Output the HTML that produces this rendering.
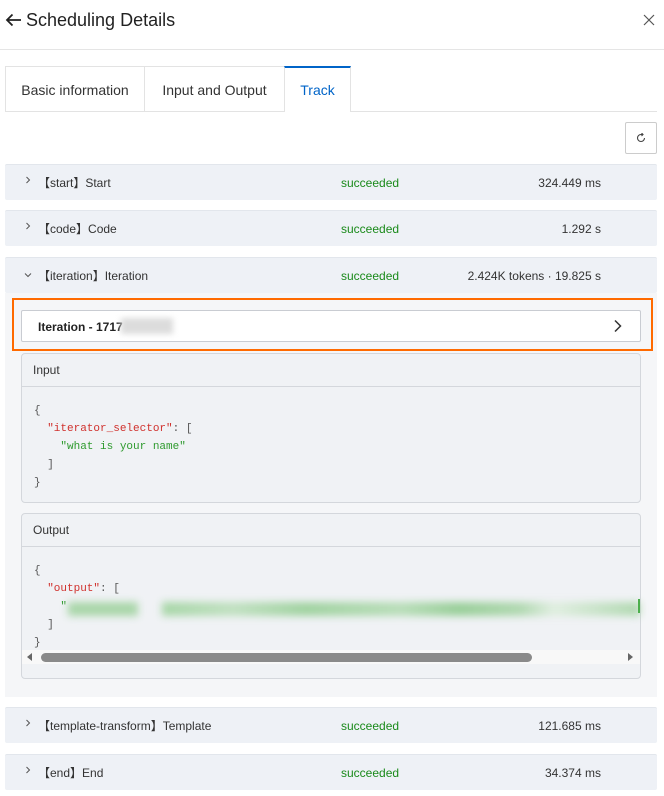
<!DOCTYPE html>
<html><head><meta charset="utf-8"><style>
*{box-sizing:border-box;margin:0;padding:0}
body{width:664px;height:796px;background:#fff;font-family:"Liberation Sans","Noto Sans CJK SC",sans-serif;color:#333;position:relative;overflow:hidden;font-size:12px}
.a{position:absolute}
.row{position:absolute;left:5px;width:652px;height:36px;background:#eef1f6;border-top:1px solid #e2e6ec;border-radius:2px}
.row svg{position:absolute;left:19px;top:11px}
.row .lb{position:absolute;left:33px;top:11px;font-size:12px;line-height:14px;color:#333;font-family:"Liberation Sans",sans-serif}
.row .st{position:absolute;left:336px;top:11px;line-height:14px;color:#1a8a1a}
.row .tm{position:absolute;right:56px;top:11px;line-height:14px;color:#333}
.mono{font-family:"Liberation Mono","DejaVu Sans Mono",monospace;font-size:11px}
.card{position:absolute;left:21px;width:620px;border:1px solid #d4d7dc;border-radius:4px;background:#f0f2f5}
.card .hd{height:33px;border-bottom:1px solid #d4d7dc;padding:9px 11px;font-size:12px;color:#333}
.r{color:#d0312d}.g{color:#2e9a2e}.k{color:#555}
</style></head><body>
<svg class="a" style="left:5px;top:13px" width="17" height="14" viewBox="0 0 17 14"><path d="M16 7H2M7.5 1.5L2 7l5.5 5.5" fill="none" stroke="#222" stroke-width="1.8"/></svg>
<div class="a" style="left:26px;top:9px;font-size:18px;line-height:22px;color:#222">Scheduling Details</div>
<svg class="a" style="left:643px;top:14px" width="12" height="12" viewBox="0 0 12 12"><path d="M1 1l10 10M11 1L1 11" stroke="#555" stroke-width="1.2"/></svg>
<div class="a" style="left:0;top:49px;width:664px;height:1px;background:#e5e5e5"></div>

<div class="a" style="left:5px;top:66px;width:140px;height:46px;border:1px solid #e3e3e3;background:#fff;padding-top:15px;text-align:center;font-size:14px;color:#333">Basic information</div>
<div class="a" style="left:145px;top:66px;width:140px;height:46px;border:1px solid #e3e3e3;border-left:none;background:#fff;padding-top:15px;text-align:center;font-size:14px;color:#333">Input and Output</div>
<div class="a" style="left:284px;top:66px;width:67px;height:46px;border-top:2px solid #0064c8;border-left:1px solid #e3e3e3;border-right:1px solid #e3e3e3;background:#fff;padding-top:14px;text-align:center;font-size:14px;color:#0064c8">Track</div>
<div class="a" style="left:350px;top:111px;width:307px;height:1px;background:#e3e3e3"></div>

<div class="a" style="left:625px;top:122px;width:32px;height:32px;border:1px solid #ccc;border-radius:2px"></div>
<svg class="a" style="left:636px;top:133px" width="10" height="10" viewBox="0 0 10 10"><path d="M8.5 5A3.5 3.5 0 1 1 5 1.5h1.5" fill="none" stroke="#444" stroke-width="1.1"/><path d="M5.5 0L7 1.5 5.5 3" fill="none" stroke="#444" stroke-width="1.1"/></svg>

<div class="row" style="top:164px"><svg width="8" height="8" viewBox="0 0 8 8"><path d="M2.5 1l3 3-3 3" fill="none" stroke="#555" stroke-width="1"/></svg><span class="lb">【start】Start</span><span class="st">succeeded</span><span class="tm">324.449 ms</span></div>
<div class="row" style="top:210px"><svg width="8" height="8" viewBox="0 0 8 8"><path d="M2.5 1l3 3-3 3" fill="none" stroke="#555" stroke-width="1"/></svg><span class="lb">【code】Code</span><span class="st">succeeded</span><span class="tm">1.292 s</span></div>
<div class="row" style="top:257px"><svg width="8" height="8" viewBox="0 0 8 8" style="top:13px"><path d="M1 2.5l3 3 3-3" fill="none" stroke="#555" stroke-width="1"/></svg><span class="lb">【iteration】Iteration</span><span class="st">succeeded</span><span class="tm">2.424K tokens · 19.825 s</span></div>

<div class="a" style="left:5px;top:293px;width:652px;height:404px;background:#f5f6f8"></div>
<div class="a" style="left:12px;top:298px;width:641px;height:53px;border:2px solid #ff6a00"></div>
<div class="a" style="left:21px;top:310px;width:620px;height:32px;border:1px solid #c9ccd2;border-radius:2px;background:#fff"></div>
<div class="a" style="left:38px;top:320px;font-size:12px;line-height:14px;color:#222;font-weight:bold">Iteration - 1717</div>
<div class="a" style="left:121px;top:318px;width:52px;height:16px;background:#dcdcdc;filter:blur(3px)"></div>
<svg class="a" style="left:612px;top:319px" width="10" height="14" viewBox="0 0 10 14"><path d="M3 1.5L8.5 7 3 12.5" fill="none" stroke="#333" stroke-width="1.5"/></svg>

<div class="card" style="top:353px;height:150px"><div class="hd">Input</div>
<div class="mono" style="padding:15px 0 0 12px;line-height:18px"><span class="k">{</span><br>&nbsp;&nbsp;<span class="r">"iterator_selector"</span><span class="k">: [</span><br>&nbsp;&nbsp;&nbsp;&nbsp;<span class="g">"what is your name"</span><br>&nbsp;&nbsp;<span class="k">]</span><br><span class="k">}</span></div></div>

<div class="card" style="top:513px;height:166px"><div class="hd">Output</div>
<div class="mono" style="padding:15px 0 0 12px;line-height:18px"><span class="k">{</span><br>&nbsp;&nbsp;<span class="r">"output"</span><span class="k">: [</span><br>&nbsp;&nbsp;&nbsp;&nbsp;<span class="g">"</span><br>&nbsp;&nbsp;<span class="k">]</span><br><span class="k">}</span></div>
<div class="a" style="left:46px;top:88px;width:70px;height:14px;background:#a9d6a9;filter:blur(4px)"></div>
<div class="a" style="left:140px;top:88px;width:478px;height:14px;background:linear-gradient(90deg,#a7d6a7,#c0e0c0 15%,#a0d2a0 30%,#b8ddb8 50%,#98ce98 62%,#b0d8b0 75%,#e0eee0 82%,#b0d8b0);filter:blur(4px)"></div>
<div class="a" style="left:616px;top:85px;width:2px;height:14px;background:#4caf4c"></div>
<div class="a" style="left:0;top:136px;width:618px;height:14px;background:#f8f8f8"></div>
<svg class="a" style="left:5px;top:139px" width="6" height="8" viewBox="0 0 6 8"><path d="M5 0L0 4l5 4z" fill="#666"/></svg>
<svg class="a" style="left:605px;top:139px" width="6" height="8" viewBox="0 0 6 8"><path d="M1 0l5 4-5 4z" fill="#666"/></svg>
<div class="a" style="left:19px;top:139px;width:491px;height:9px;background:#8a8a8a;border-radius:5px"></div>
</div>

<div class="row" style="top:707px"><svg width="8" height="8" viewBox="0 0 8 8"><path d="M2.5 1l3 3-3 3" fill="none" stroke="#555" stroke-width="1"/></svg><span class="lb">【template-transform】Template</span><span class="st">succeeded</span><span class="tm">121.685 ms</span></div>
<div class="row" style="top:754px"><svg width="8" height="8" viewBox="0 0 8 8"><path d="M2.5 1l3 3-3 3" fill="none" stroke="#555" stroke-width="1"/></svg><span class="lb">【end】End</span><span class="st">succeeded</span><span class="tm">34.374 ms</span></div>
</body></html>
